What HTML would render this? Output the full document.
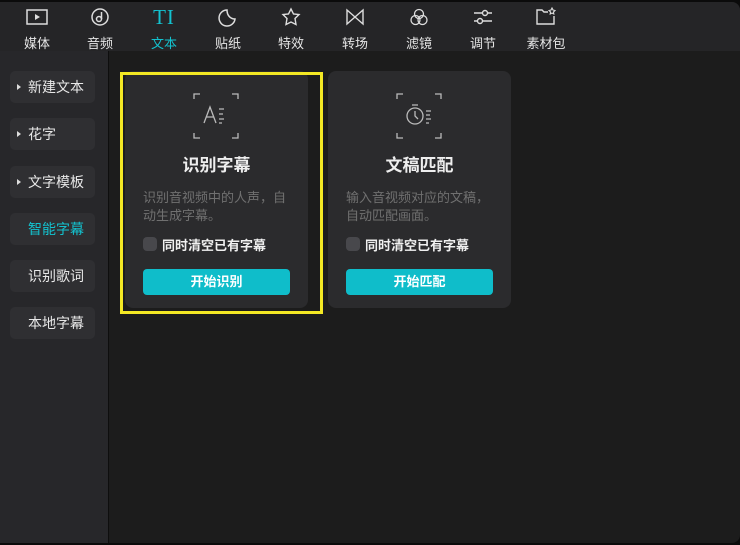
<!DOCTYPE html><html><head><meta charset="utf-8"><style>
*{margin:0;padding:0;box-sizing:border-box}
body{width:740px;height:545px;background:#0b0b0b;font-family:"Liberation Sans","Noto Sans CJK SC",sans-serif;overflow:hidden;position:relative}
.app{position:absolute;left:0;top:2px;width:740px;height:541px;background:#1c1c1c;border-radius:0 8px 8px 0;overflow:hidden}
.top{position:absolute;left:0;top:0;width:740px;height:49px;background:#252527}
.tab{position:absolute;top:0;width:60px;text-align:center;color:#e6e6e6;font-size:13px}
.tab svg{position:absolute;left:19px;top:5px}
.tab span{position:absolute;left:0;width:60px;top:31px}
.side{position:absolute;left:0;top:49px;width:109px;height:492px;background:#27272a;border-right:1px solid #0e0e0e}
.it{position:absolute;left:10px;width:85px;height:32px;background:#2f2f32;border-radius:5px;color:#e8e8e8;font-size:14px;line-height:32px;padding-left:18px}
.it i{position:absolute;left:7px;top:13px;border-left:4px solid #ddd;border-top:3px solid transparent;border-bottom:3px solid transparent}
.card{position:absolute;top:69px;width:183px;height:237px;background:#2b2b2d;border-radius:8px}
.card h3{position:absolute;top:80px;width:100%;text-align:center;color:#eee;font-size:17px;font-weight:bold}
.card p{position:absolute;left:18px;top:118px;width:152px;color:#707070;font-size:13px;line-height:18px}
.cb{position:absolute;left:18px;top:166px;width:14px;height:14px;border-radius:4px;background:#48484c}
.cl{position:absolute;left:37px;top:164px;color:#f0f0f0;font-size:13px;font-weight:bold}
.btn{position:absolute;left:18px;top:198px;width:147px;height:26px;border-radius:4px;background:#0fbdca;color:#fff;font-size:13px;font-weight:bold;text-align:center;line-height:26px}
.card svg{position:absolute;left:68px;top:22px}
</style></head><body><div class="app">
<div class="top">
<div class="tab" style="left:7px"><svg width="22" height="20" viewBox="0 0 22 20"><rect x="1" y="3" width="20" height="14" fill="none" stroke="#ddd" stroke-width="1.5"/><path d="M9 7l5 3-5 3z" fill="#ddd"/></svg><span>媒体</span></div>
<div class="tab" style="left:70px"><svg width="22" height="20" viewBox="0 0 22 20"><circle cx="11" cy="10" r="8" fill="none" stroke="#ddd" stroke-width="1.5"/><circle cx="10" cy="12" r="2.5" fill="none" stroke="#ddd" stroke-width="1.5"/><path d="M12.5 12V5" stroke="#ddd" stroke-width="1.5"/></svg><span>音频</span></div>
<div class="tab" style="left:134px;color:#13c2cf"><span style="top:3px;font-family:'Liberation Serif',serif;font-size:21px;letter-spacing:1px">TI</span><span>文本</span></div>
<div class="tab" style="left:198px"><svg width="22" height="20" viewBox="0 0 22 20"><path d="M18 12A8 8 0 1 1 10 3c0 5 3 9 8 9z" fill="none" stroke="#ddd" stroke-width="1.5"/></svg><span>贴纸</span></div>
<div class="tab" style="left:261px"><svg width="22" height="20" viewBox="0 0 22 20"><path d="M11 2l2.5 5 5.5.5-4 4 1 6L11 15l-5 2.5 1-6-4-4 5.5-.5z" fill="none" stroke="#ddd" stroke-width="1.4"/></svg><span>特效</span></div>
<div class="tab" style="left:325px"><svg width="22" height="20" viewBox="0 0 22 20"><path d="M3 3v14l16-14v14z" fill="none" stroke="#ddd" stroke-width="1.4"/></svg><span>转场</span></div>
<div class="tab" style="left:389px"><svg width="22" height="20" viewBox="0 0 22 20"><circle cx="11" cy="7" r="4.5" fill="none" stroke="#ddd" stroke-width="1.3"/><circle cx="7.5" cy="13" r="4.5" fill="none" stroke="#ddd" stroke-width="1.3"/><circle cx="14.5" cy="13" r="4.5" fill="none" stroke="#ddd" stroke-width="1.3"/></svg><span>滤镜</span></div>
<div class="tab" style="left:453px"><svg width="22" height="20" viewBox="0 0 22 20"><path d="M2 6h18M2 14h18" stroke="#ddd" stroke-width="1.4"/><circle cx="13" cy="6" r="2.5" fill="#252527" stroke="#ddd" stroke-width="1.4"/><circle cx="8" cy="14" r="2.5" fill="#252527" stroke="#ddd" stroke-width="1.4"/></svg><span>调节</span></div>
<div class="tab" style="left:516px"><svg width="22" height="20" viewBox="0 0 22 20"><path d="M13 5H9L7 3H2v14h17V9" fill="none" stroke="#ddd" stroke-width="1.4"/><path d="M17 1l1 2 2 .5-1.5 1.5.3 2L17 6l-1.8 1 .3-2L14 3.5l2-.5z" fill="none" stroke="#ddd" stroke-width="1.1"/></svg><span>素材包</span></div>
</div>
<div class="side">
<div class="it" style="top:20px"><i></i>新建文本</div>
<div class="it" style="top:67px"><i></i>花字</div>
<div class="it" style="top:115px"><i></i>文字模板</div>
<div class="it" style="top:162px;color:#13c2cf">智能字幕</div>
<div class="it" style="top:209px">识别歌词</div>
<div class="it" style="top:256px">本地字幕</div>
</div>
<div class="card" style="left:125px">
<svg width="46" height="46" viewBox="0 0 46 46" fill="none" stroke="#bbb" stroke-width="1.3"><path d="M1 6V1h6M39 1h6v5M45 40v5h-6M7 45H1v-5"/><path d="M11 30l6-16 6 16M13.5 24h7M26 16h5M26 21h4M26 26h5M26 30h3"/></svg>
<h3>识别字幕</h3><p>识别音视频中的人声，自动生成字幕。</p><div class="cb"></div><div class="cl">同时清空已有字幕</div><div class="btn">开始识别</div></div>
<div class="card" style="left:328px">
<svg width="46" height="46" viewBox="0 0 46 46" fill="none" stroke="#bbb" stroke-width="1.3"><path d="M1 6V1h6M39 1h6v5M45 40v5h-6M7 45H1v-5"/><circle cx="19" cy="23" r="8"/><path d="M16 12h6M19 18v5l3 3M30 18h5M30 22h4M30 26h5M30 30h3"/></svg>
<h3>文稿匹配</h3><p>输入音视频对应的文稿，自动匹配画面。</p><div class="cb"></div><div class="cl">同时清空已有字幕</div><div class="btn">开始匹配</div></div>
<div style="position:absolute;left:120px;top:70px;width:203px;height:242px;border:3px solid #f3e824"></div>
</div></body></html>
